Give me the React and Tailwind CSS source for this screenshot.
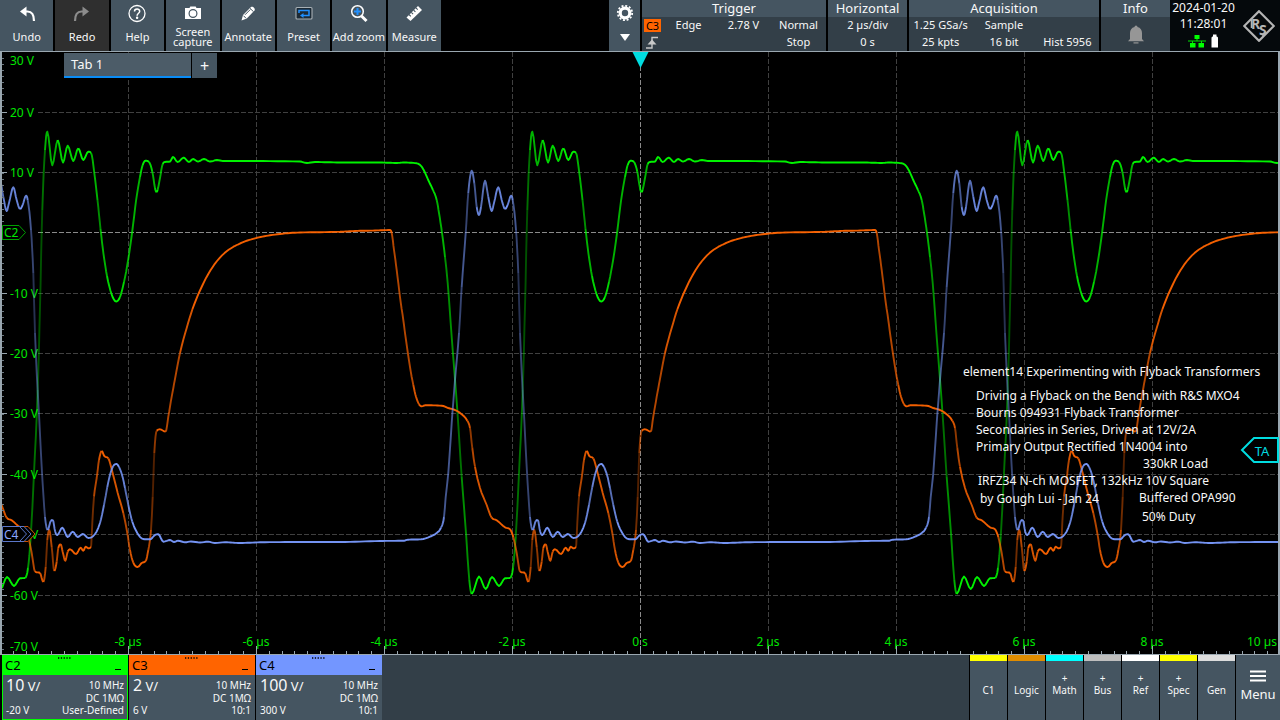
import React from "react";

const PERIOD = 485;

/* One switching period per channel, as x,y pairs in screen units. */
const C2 = [
  47.3, 131.7, 52.3, 165.3, 57.7, 140, 63, 162.5, 67.7, 145.7, 73.3, 161, 78.3, 148.3, 83.3, 160, 88.3, 151.7, 91, 152.7,
  94.3, 173, 97.5, 200, 100.5, 229, 103.5, 254, 107, 276, 111.5, 294, 116, 301.5, 120, 297, 124, 282, 128.3, 259,
  132.3, 231, 136, 201, 140, 177, 142.7, 165, 145.7, 160.7, 149, 162, 152.3, 171.7, 155, 188, 156.3, 192, 157.6, 190,
  160, 178, 162.7, 164, 165, 162, 170, 161.5, 173, 157, 177.7, 162, 183.7, 157.7, 189, 162, 193, 159, 198, 161.5,
  204, 159, 210, 161.5, 217, 160, 223, 161, 240, 161, 300, 161.5, 307, 163, 315, 162, 340, 162.5, 380, 162.5, 397, 163,
  403, 162.5, 416.7, 163.3, 421.7, 166.7, 425, 172.7, 429, 181.7, 433, 190, 436.7, 200, 439, 213, 442, 233, 445, 257,
  447.7, 283, 451.7, 337, 457.3, 410, 461.7, 477, 466, 533, 469.3, 580, 471.7, 594, 479, 576.5, 485.7, 589, 492, 577,
  499, 586, 505, 578.3, 510, 578, 513, 568, 515.7, 537, 519, 473, 522.7, 390, 525, 307, 527.3, 210, 530, 150,
];

const C4 = [
  39.3, 420, 41.7, 467, 45, 517, 47.7, 530, 50.7, 521, 52.7, 520, 55.3, 532, 57.3, 535, 62.3, 527.7, 67.7, 537,
  72.7, 531.7, 77.7, 537, 83, 534, 88.3, 538, 93.3, 536, 100, 523, 104, 505, 107.3, 487, 110.5, 473, 113.3, 466,
  116.3, 464, 119, 467, 122.3, 476, 125, 488, 128.3, 505, 132.3, 521.7, 137.3, 533, 143, 539, 150, 539.3, 155, 535,
  158.3, 534.3, 163.3, 541.7, 170, 540, 174, 542, 178, 540.7, 185, 542.3, 191, 541.5, 200, 542.5, 208, 541.7, 215, 543,
  225, 542.3, 240, 543, 260, 542.3, 300, 542, 340, 542, 380, 541, 404, 540.7, 408, 539.7, 421, 539.3, 430, 536.7,
  436.7, 533, 441, 527.7, 444, 517, 445.7, 497, 448.3, 473, 451.7, 423, 455, 380, 459, 333, 461.7, 287, 465.7, 233,
  468.3, 193, 471.7, 170.7, 474.3, 183, 476.7, 207, 479, 215, 481, 207, 485, 180.7, 488.3, 197, 491.7, 211, 494, 203,
  498.3, 187.3, 501.7, 200, 505, 209, 507.7, 205, 511, 195.7, 512.7, 200, 516, 230, 518.3, 273, 520, 333,
];

const C3 = [
  156.7, 430.7, 160, 429.3, 165.7, 431.7, 168.3, 416.7, 171.7, 396.7, 174.8, 380, 180, 353, 186.7, 328, 192.500, 309,
  200, 290.5, 208.3, 274, 217, 261, 227, 251, 240, 243.5, 255, 238.3, 270, 235.3, 290, 233, 300, 232.5, 340, 231.8,
  355, 231, 375, 230.5, 390, 230, 391.7, 233, 394, 250, 396.7, 270, 400, 297, 403.3, 320, 406, 340, 410, 367,
  413.3, 385, 416, 396.7, 419, 404.3, 421.7, 406.3, 425, 405.3, 441.7, 405.7, 448.3, 408, 455, 410, 461.7, 414.3,
  467.3, 420.7, 470, 428, 472.3, 448, 475, 466.7, 480, 488, 486.7, 505, 491.7, 517.7, 496.7, 520.3, 505, 527.3,
  510, 529.3, 513.3, 537, 516.7, 553, 520, 571.7, 525, 573, 528.3, 582, 530.7, 567, 532.3, 540, 534.3, 530, 536.7, 547,
  539.3, 571, 541.7, 561.7, 543.3, 548, 545.7, 544.3, 547.7, 552, 550.3, 560.7, 552.7, 551.7, 555, 549.3, 561, 554,
  565.7, 547.7, 568.3, 550.7, 570.7, 546.7, 573.3, 548.3, 576, 547, 577.3, 523, 579, 496.7, 581.7, 478, 584, 460,
  586.7, 451, 589.3, 456, 593.3, 458.3, 597.3, 471.7, 602.7, 493, 608.3, 513, 612.3, 533, 615, 550, 618.3, 562.7,
  622.7, 567, 626.7, 563, 630.7, 561, 633.3, 550, 636, 530, 637.7, 496.7, 639.3, 453,
];

const LEVELS = [0.32, 0.44, 0.56, 0.7, 0.84, 0.95];

/* Repeats one period over the whole sweep. */
function repeat(flat) {
  const out = [];
  for (let k = -2; k <= 3; k++) {
    for (let i = 0; i < flat.length; i += 2) out.push([flat[i] + k * PERIOD, flat[i + 1]]);
  }
  return out.filter(([x]) => x > -40 && x < 1330);
}

/* Monotone cubic interpolation; fast edges are drawn dimmer, as on a phosphor display. */
function trace(flat) {
  const p = repeat(flat);
  const n = p.length;
  const d = [];
  for (let i = 0; i < n - 1; i++) d.push((p[i + 1][1] - p[i][1]) / (p[i + 1][0] - p[i][0]));
  const m = p.map((_, i) => {
    if (i === 0) return d[0];
    if (i === n - 1) return d[n - 2];
    if (d[i - 1] * d[i] <= 0) return 0;
    const mean = Math.abs(d[i - 1] + d[i]) / 2;
    const limit = 2.5 * Math.min(Math.abs(d[i - 1]), Math.abs(d[i]));
    return Math.sign(d[i]) * Math.min(mean, limit);
  });
  const paths = LEVELS.map(() => "");
  let last = -1;
  for (let i = 0; i < n - 1; i++) {
    const h = p[i + 1][0] - p[i][0];
    const steps = h > 12 ? 8 : 4;
    let px = p[i][0];
    let py = p[i][1];
    const v = Math.max(0.32, Math.min(0.95, 1.22 - 0.26 * Math.log(1 + Math.abs(d[i]))));
    let level = 0;
    LEVELS.forEach((l, j) => {
      if (Math.abs(l - v) < Math.abs(LEVELS[level] - v)) level = j;
    });
    if (level !== last) paths[level] += `M${px.toFixed(1)} ${py.toFixed(1)}`;
    last = level;
    for (let s = 1; s <= steps; s++) {
      const t = s / steps;
      const t2 = t * t;
      const t3 = t2 * t;
      px = p[i][0] + h * t;
      py =
        (2 * t3 - 3 * t2 + 1) * p[i][1] +
        (t3 - 2 * t2 + t) * h * m[i] +
        (3 * t2 - 2 * t3) * p[i + 1][1] +
        (t3 - t2) * h * m[i + 1];
      paths[level] += `L${px.toFixed(1)} ${py.toFixed(1)}`;
    }
  }
  return paths;
}

function Trace({ points, color }) {
  return trace(points).map((d, i) => (
    <path key={i} d={d} fill="none" stroke={color} strokeWidth="1.9" strokeLinejoin="round" strokeOpacity={LEVELS[i]} />
  ));
}

const H_LINES = [112, 172, 232, 293, 353, 413, 474, 534, 595];
const V_LINES = [128, 256, 384, 512, 640, 768, 896, 1024, 1152];
const V_LABELS = [
  ["30 V", 65], ["20 V", 117], ["10 V", 177], ["-10 V", 298], ["-20 V", 358],
  ["-30 V", 418], ["-40 V", 479], ["-60 V", 600], ["-70 V", 651],
];
const T_LABELS = ["-8 µs", "-6 µs", "-4 µs", "-2 µs", "0 s", "2 µs", "4 µs", "6 µs", "8 µs"];

function Plot() {
  return (
    <svg viewBox="0 51 1280 604" className="block h-auto w-full bg-black font-['Noto_Sans',sans-serif]" role="img" aria-label="Waveforms">
      <g strokeWidth="1" fill="none" strokeDasharray="5 2">
        {H_LINES.map((y) => (
          <path key={y} d={`M38 ${y + 0.5}H1279`} stroke={y === 232 ? "#8a8a8a" : "#404040"} />
        ))}
        {V_LINES.map((x) => (
          <path key={x} d={`M${x + 0.5} 52V${x === 640 ? 654 : 633}`} stroke={x === 640 ? "#8a8a8a" : "#404040"} />
        ))}
      </g>
      <g fill="#00e600" fontSize="12">
        {V_LABELS.map(([t, y]) => (
          <text key={t} x="10" y={y}>{t}</text>
        ))}
        <text x="31" y="539">V</text>
        {T_LABELS.map((t, i) => (
          <text key={t} x={128 + i * 128} y="646" textAnchor="middle">{t}</text>
        ))}
        <text x="1277" y="646" textAnchor="end">10 µs</text>
      </g>
      <Trace points={C2} color="#00ff00" />
      <Trace points={C3} color="#ff6400" />
      <Trace points={C4} color="#7a9bff" />
      <g stroke="#9aa7b0" fill="none">
        <path d="M0 51.5H1280" strokeWidth="1" />
        <path d="M0 654.5H1280" strokeWidth="1" />
        <path d="M1 52V654M1279 52V654" strokeWidth="2" />
        {Array.from({ length: 99 }, (_, i) => (
          <path key={i} d={`M2 ${Math.round(58 + i * 6.03)}.5h2`} strokeWidth="1" stroke="#6d7880" />
        ))}
        {H_LINES.map((y) => (
          <path key={y} d={`M2 ${y + 0.5}h5`} />
        ))}
        {Array.from({ length: 99 }, (_, i) => (
          <path key={i} d={`M${Math.round((i + 1) * 12.8)}.5 654v-3`} />
        ))}
        {V_LINES.map((x) => (
          <path key={x} d={`M${x + 0.5} 654V646`} />
        ))}
      </g>
      <path d="M632.5 52h16l-8 16z" fill="#00dce0" />
      <path d="M2.5 225.500H19L25.500 232.500L19 239.500H2.500Z" fill="#000" stroke="#00a000" />
      <text x="4" y="237" fill="#00e600" fontSize="12">C2</text>
      <path d="M20 526.500h8l7 7.500l-7 7.500h-8" fill="#000" stroke="#c85000" />
      <path d="M2.500 526.500H24L31 534L24 541.500H2.500Z" fill="#000" stroke="#5a76c8" />
      <path d="M20 527l6.500 7l-6.500 7" fill="none" stroke="#5a76c8" />
      <text x="4" y="539" fill="#8aa6ff" fontSize="12">C4</text>
      <path d="M1278 438H1254L1242 450L1254 462H1278Z" fill="#000" stroke="#00dce0" strokeWidth="2" />
      <text x="1262" y="456" fill="#00dce0" fontSize="13" textAnchor="middle">TA</text>
      <g fill="#f8f8f8" fontSize="12">
        <text x="963" y="376">element14 Experimenting with Flyback Transformers</text>
        <text x="976" y="400">Driving a Flyback on the Bench with R&amp;S MXO4</text>
        <text x="976" y="417">Bourns 094931 Flyback Transformer</text>
        <text x="976" y="434">Secondaries in Series, Driven at 12V/2A</text>
        <text x="976" y="451">Primary Output Rectified 1N4004 into</text>
        <text x="1143" y="468">330kR Load</text>
        <text x="978" y="485">IRFZ34 N-ch MOSFET, 132kHz 10V Square</text>
        <text x="980" y="503">by Gough Lui - Jan 24</text>
        <text x="1139" y="502">Buffered OPA990</text>
        <text x="1142" y="521">50% Duty</text>
      </g>
    </svg>
  );
}

const ICONS = {
  undo: (
    <g stroke="currentColor" fill="none">
      <path d="M7 7.500H10.500C15 7.500 17 10.500 17 17" strokeWidth="2.200" />
      <path d="M3 7.500L9.500 2.500V12.500Z" fill="currentColor" stroke="none" />
    </g>
  ),
  redo: (
    <g stroke="currentColor" fill="none">
      <path d="M13 7.500H9.500C5 7.500 3 10.500 3 17" strokeWidth="2.200" />
      <path d="M17 7.500L10.500 2.500V12.500Z" fill="currentColor" stroke="none" />
    </g>
  ),
  help: (
    <g stroke="currentColor" fill="none" strokeWidth="1.3">
      <circle cx="10" cy="9.500" r="8" />
      <path d="M7.500 7.500C7.500 4.300 12.700 4.300 12.700 7.300C12.700 9.300 10.100 9.200 10.100 11.700" strokeWidth="1.500" />
      <circle cx="10.100" cy="13.800" r="0.600" fill="currentColor" />
    </g>
  ),
  camera: (
    <g>
      <path d="M2 4h4.500l0.800-1.500h5.400l0.800 1.500h4.500v11H2z" fill="currentColor" />
      <circle cx="10" cy="9.500" r="3.900" fill="none" stroke="#455561" strokeWidth="1.200" />
    </g>
  ),
  pencil: (
    <g fill="currentColor">
      <path d="M3.500 16.500L5 11L13 3C14.500 1.800 17.700 4.500 16.500 6.500L8.800 14.500Z" />
      <path d="M5.500 11.700L8 14.300M12 4.300L15.500 7.700M7 10.800L12.300 5.500" stroke="#455561" strokeWidth="1" fill="none" />
    </g>
  ),
  preset: (
    <g fill="none">
      <rect x="2" y="3.500" width="16" height="11.500" rx="1" stroke="#a8b0b5" strokeWidth="1.100" fill="#1c2a35" />
      <path d="M5 9V6.500H15V11.500H8" stroke="#2090ff" strokeWidth="1.500" />
      <path d="M6 11.500L9.500 9V14Z" fill="#2090ff" />
    </g>
  ),
  zoom: (
    <g fill="none">
      <path d="M12.500 12L17.500 17" stroke="currentColor" strokeWidth="3" />
      <circle cx="8.500" cy="7.500" r="5.800" stroke="currentColor" strokeWidth="1.500" />
      <path d="M8.500 4V11M5 7.500H12" stroke="#2090ff" strokeWidth="2" />
    </g>
  ),
  ruler: (
    <g>
      <path d="M2.500 13.500L14 2L18 6L6.500 17Z" fill="currentColor" />
      <path d="M5 10.500l1.800 1.800M7.300 8.300l1.800 1.800M9.600 6.100l1.800 1.800M11.900 3.900l1.800 1.800" stroke="#455561" strokeWidth="1.100" />
    </g>
  ),
};

const TOOLS = [
  ["Undo", "undo"], ["Redo", "redo"], ["Help", "help"], ["Screen capture", "camera"],
  ["Annotate", "pencil"], ["Preset", "preset"], ["Add zoom", "zoom"], ["Measure", "ruler"],
];

function Tool({ label, icon }) {
  const off = icon === "redo";
  return (
    <button type="button" className={`flex min-w-0 flex-1 flex-col items-center pt-1 pb-px ${off ? "bg-[#2f2f2f]" : "bg-[#455561]"}`}>
      <svg viewBox="0 0 20 20" className={`h-5 w-5 shrink-0 ${off ? "text-[#8c8c8c]" : "text-white"}`} aria-hidden="true">{ICONS[icon]}</svg>
      <span className={`flex flex-1 items-center text-center leading-[10px] ${label === "Add zoom" ? "whitespace-nowrap" : ""}`}>{label}</span>
    </button>
  );
}

function Panel({ title, className, children }) {
  return (
    <section className={`flex flex-col bg-[#333f48] ${className}`}>
      <h2 className="bg-[#455561] text-center text-[13px] leading-[17px]">{title}</h2>
      {children}
    </section>
  );
}

const CHANNELS = [
  { name: "C2", head: "bg-[#00ff00]", frame: "border-[#00ff00]", scale: "10", offset: "-20 V", probe: "User-Defined" },
  { name: "C3", head: "bg-[#ff6400]", frame: "border-[#455561]", scale: "2", offset: "6 V", probe: "10:1" },
  { name: "C4", head: "bg-[#7396ff]", frame: "border-[#455561]", scale: "100", offset: "300 V", probe: "10:1" },
];

function Channel({ name, head, frame, scale, offset, probe }) {
  return (
    <section className="flex w-[126px] flex-col">
      <header className={`relative flex h-5 items-center justify-between px-[3px] text-black ${head}`}>
        <span className="text-[13px] leading-5">{name}</span>
        <svg viewBox="0 0 13 3" className="absolute left-14 top-0.5 h-[3px] w-[13px]" aria-hidden="true">
          <path d="M0 1h13" stroke="#000" strokeWidth="1.300" strokeDasharray="1.300 1.500" />
        </svg>
        <button type="button" aria-label={`Minimize ${name}`} className="mt-2 mr-1 h-px w-1.5 bg-black" />
      </header>
      <div className={`grid flex-1 grid-cols-[auto_1fr] content-between border border-t-0 bg-[#455561] px-[3px] pb-[3px] text-[10px] leading-3 ${frame}`}>
        <p className="row-span-2 whitespace-nowrap pt-0.5 text-[13px] leading-4"><span className="text-base leading-4">{scale}</span> V/</p>
        <p className="pt-1 text-right">10 MHz</p>
        <p className="text-right">DC 1MΩ</p>
        <p className="whitespace-nowrap">{offset}</p>
        <p className="text-right">{probe}</p>
      </div>
    </section>
  );
}

const SOURCES = [
  ["C1", "border-[#ffff00]", false], ["Logic", "border-[#e08c00]", false], ["Math", "border-[#00ffff]", true],
  ["Bus", "border-[#bebebe]", true], ["Ref", "border-white", true], ["Spec", "border-[#ffff00]", true],
  ["Gen", "border-[#dcdcdc]", false],
];

export default function App() {
  return (
    <div className="flex min-h-screen flex-col bg-black font-['Noto_Sans',sans-serif] text-[11px] text-[#f8f8f8]">
      <header className="flex h-[51px]">
        <nav aria-label="Toolbar" className="flex w-[441px] gap-0.5">
          {TOOLS.map(([label, icon]) => (
            <Tool key={label} label={label} icon={icon} />
          ))}
        </nav>
        <div className="flex-1" />
        <div className="flex gap-0.5">
          <button type="button" aria-label="Settings" className="flex w-[31px] flex-col items-center justify-between bg-[#455561] pt-1 pb-2.5">
            <svg viewBox="0 0 18 18" className="h-[18px] w-[18px]" aria-hidden="true">
              <circle cx="9" cy="9" r="4.800" fill="none" stroke="#fff" strokeWidth="3.200" />
              <circle cx="9" cy="9" r="7.200" fill="none" stroke="#fff" strokeWidth="1.800" strokeDasharray="2 1.770" />
            </svg>
            <svg viewBox="0 0 10 7" className="h-[7px] w-[10px]" aria-hidden="true"><path d="M0 0H10L5 7Z" fill="#fff" /></svg>
          </button>
          <Panel title="Trigger" className="w-[184px]">
            <div className="grid flex-1 grid-cols-[17px_1fr_1fr_1fr] items-center pl-0.5 text-center">
              <span className="bg-[#ff6400] leading-[13px] text-black">C3</span>
              <span>Edge</span>
              <span>2.78 V</span>
              <span>Normal</span>
              <svg viewBox="0 0 13 13" className="ml-0.5 h-[13px] w-[13px]" aria-label="Rising edge">
                <path d="M0 12H6V1.500H12" fill="none" stroke="#c8c8c8" strokeWidth="1.400" />
                <path d="M1.500 8.500L6 3.500L10.500 8.500Z" fill="#c8c8c8" />
              </svg>
              <span className="col-start-4">Stop</span>
            </div>
          </Panel>
          <Panel title="Horizontal" className="w-[79px]">
            <div className="grid flex-1 items-center text-center"><span>2 µs/div</span><span>0 s</span></div>
          </Panel>
          <Panel title="Acquisition" className="w-[190px]">
            <div className="grid flex-1 grid-cols-3 items-center text-center">
              <span>1.25 GSa/s</span><span>Sample</span><span />
              <span>25 kpts</span><span>16 bit</span><span>Hist 5956</span>
            </div>
          </Panel>
          <Panel title="Info" className="w-[69px]">
            <div className="grid flex-1 place-items-center">
              <svg viewBox="0 0 18 19" className="h-[19px] w-[18px]" aria-label="Notifications">
                <path d="M9 0.500a1.500 1.500 0 0 1 1.500 1.500C13.500 2.700 15 5 15 8V14L17 16.300H1L3 14V8C3 5 4.500 2.700 7.500 2A1.500 1.500 0 0 1 9 0.500Z" fill="#969696" />
                <path d="M6.500 17.300H11.500V18.500H6.500Z" fill="#969696" />
              </svg>
            </div>
          </Panel>
        </div>
        <div className="flex w-[110px] bg-[#05090c]">
          <div className="flex w-[67px] flex-col items-center text-[12px] leading-4">
            <span className="whitespace-nowrap">2024-01-20</span>
            <span>11:28:01</span>
            <svg viewBox="0 0 32 14" className="mt-0.5 h-[14px] w-8" aria-label="Network and storage">
              <path d="M0 7H18M9 4V7M4.500 7V10M13.500 7V10" stroke="#00e600" strokeWidth="1" fill="none" />
              <path d="M6.500 1h5v4h-5zM2 9h5.500v4.500H2zM10.500 9h5.500v4.500H10.500z" fill="#00ff00" />
              <path d="M25 0.500h3.500v2h-3.500zM23.500 3.500l1-1h4.500l1 1v10h-6.500z" fill="#fff" />
            </svg>
          </div>
          <svg viewBox="0 0 32 32" className="ml-1.5 mt-2.5 h-8 w-8" aria-label="Rohde and Schwarz">
            <path d="M16 1.200L30.800 16L16 30.800L1.200 16Z" fill="none" stroke="#b4b4b4" strokeWidth="2.200" />
            <path d="M8.500 9.500V18M19 25.500L22 22" stroke="#b4b4b4" strokeWidth="1.500" />
            <text x="8" y="19" fontSize="14" fontWeight="700" fill="#b4b4b4">R</text>
            <text x="16" y="25" fontSize="14" fontWeight="700" fill="#b4b4b4">S</text>
          </svg>
        </div>
      </header>

      <main className="relative">
        <Plot />
        <div className="absolute left-16 top-0.5 flex h-[25px] gap-px text-[13px]">
          <button type="button" className="w-[127px] border-b-2 border-[#0a8cf5] bg-[#4c5c68] pl-[7px] text-left">Tab 1</button>
          <button type="button" aria-label="Add tab" className="w-[25px] bg-[#455561] text-base leading-5">+</button>
        </div>
      </main>

      <footer className="flex flex-1 justify-between bg-[#333f48]">
        <div className="flex gap-px bg-black pl-0.5">
          {CHANNELS.map((c) => (
            <Channel key={c.name} {...c} />
          ))}
        </div>
        <nav aria-label="Signal sources" className="flex gap-px bg-black pl-px">
          {SOURCES.map(([label, color, plus]) => (
            <button key={label} type="button" className={`relative w-[37px] border-t-[6px] bg-[#455561] pb-0.5 text-[10px] leading-3 ${color}`}>
              {plus && <span className="absolute inset-x-0 top-[11px] text-center">+</span>}
              <span>{label}</span>
            </button>
          ))}
          <button type="button" className="flex w-11 flex-col items-center justify-center gap-1 bg-[#455561] pb-1 text-[13px] leading-4">
            <svg viewBox="0 0 16 12" className="h-3 w-4" aria-hidden="true">
              <path d="M0 1.500H16M0 6H16M0 10.500H16" stroke="#fff" strokeWidth="2" />
            </svg>
            Menu
          </button>
        </nav>
      </footer>
    </div>
  );
}
